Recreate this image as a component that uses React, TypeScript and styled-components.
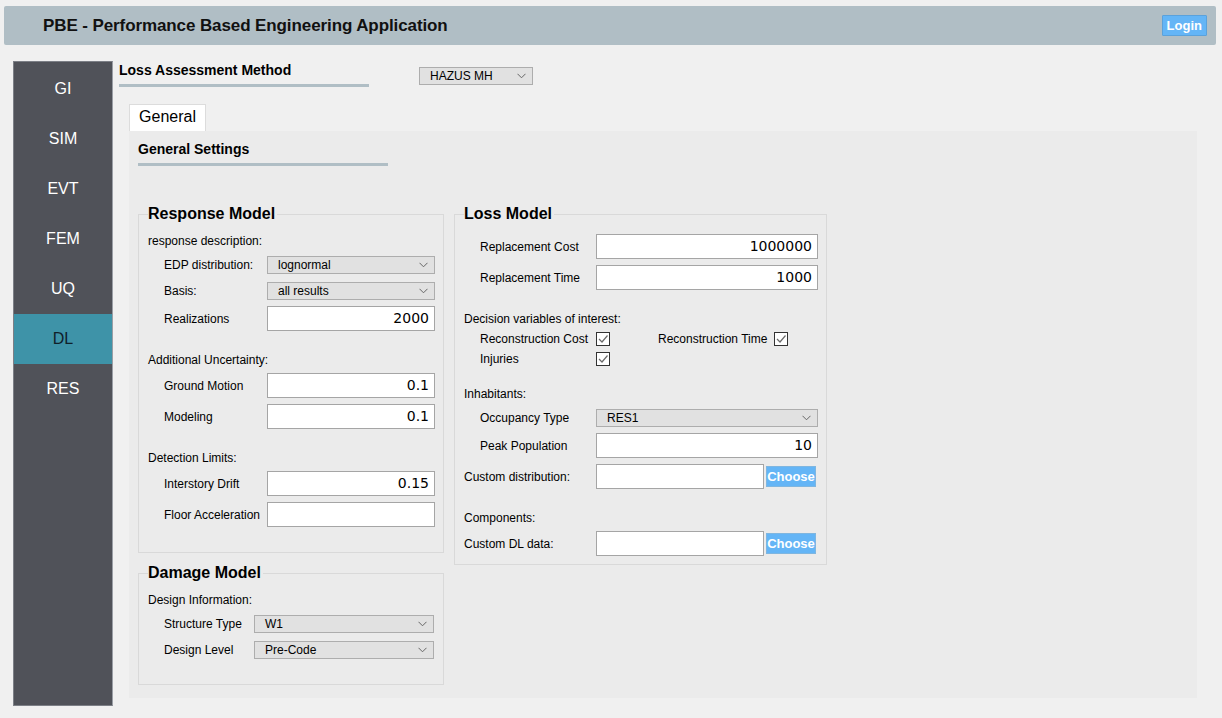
import React from "react";
import styled, { createGlobalStyle } from "styled-components";

const Global = createGlobalStyle`
  html, body { margin: 0; padding: 0; background: #f0f0f0; }
  body { font-family: "Liberation Sans", Arial, sans-serif; color: #000; }
  * { box-sizing: border-box; }
`;

const Page = styled.div`
  width: 1222px;
  height: 718px;
  padding: 6px 6px 0 4px;
  display: flex;
  flex-direction: column;
`;

const Header = styled.header`
  height: 39px;
  width: 1212px;
  background: #b0bec5;
  border-radius: 2px;
  display: flex;
  align-items: center;
  justify-content: space-between;
  padding: 0 9px 0 39px;
`;

const AppTitle = styled.h1`
  margin: 0;
  font-size: 17px;
  font-weight: bold;
  color: #111;
  letter-spacing: -0.1px;
`;

const LoginButton = styled.button`
  height: 21px;
  padding: 0 4px;
  background: #64b5f6;
  border: 1px solid #5aa2dc;
  color: #fff;
  font-family: "Liberation Sans", Arial, sans-serif;
  font-weight: bold;
  font-size: 13px;
  border-radius: 1px;
`;

const Body = styled.div`
  display: flex;
  margin-top: 16px;
  flex: 1;
`;

const Sidebar = styled.nav`
  margin-left: 9px;
  width: 100px;
  height: 645px;
  background: #505259;
  border: 1px solid #7c7f86;
  border-right-color: #9a9ea5;
  display: flex;
  flex-direction: column;
  padding-top: 2px;
`;

const NavItem = styled.div<{ $active?: boolean }>`
  height: 50px;
  display: flex;
  align-items: center;
  justify-content: center;
  font-size: 16px;
  color: ${(p) => (p.$active ? "#10202a" : "#ffffff")};
  background: ${(p) => (p.$active ? "#3e93a8" : "transparent")};
`;

const Main = styled.main`
  margin-left: 6px;
  display: flex;
  flex-direction: column;
`;

const TopBar = styled.div`
  display: flex;
  align-items: flex-start;
`;

const TitleBlock = styled.div<{ $w: number }>`
  width: ${(p) => p.$w}px;
  display: flex;
  flex-direction: column;
`;

const BlockTitle = styled.div`
  font-size: 14px;
  font-weight: bold;
  height: 19px;
  line-height: 19px;
  margin-bottom: 4px;
`;

const Underline = styled.div`
  height: 3px;
  background: #b0bec5;
`;

const Select = styled.div<{ $w: number; $pl?: number }>`
  width: ${(p) => p.$w}px;
  height: 18px;
  background: #e1e1e1;
  border: 1px solid #adadad;
  display: flex;
  align-items: center;
  justify-content: space-between;
  padding: 0 6px 0 ${(p) => p.$pl ?? 10}px;
  font-size: 12px;
  flex-shrink: 0;
`;

const TopSelectWrap = styled.div`
  margin-left: 50px;
  margin-top: 6px;
`;

const TabBar = styled.div`
  margin-top: 17px;
  margin-left: 10px;
  display: flex;
`;

const Tab = styled.div`
  width: 77px;
  height: 27px;
  background: #ffffff;
  border: 1px solid #dcdcdc;
  border-bottom: none;
  font-size: 16px;
  display: flex;
  align-items: center;
  justify-content: center;
  padding-bottom: 2px;
`;

const Panel = styled.section`
  margin-left: 10px;
  width: 1068px;
  height: 567px;
  background: #ebebeb;
  padding: 9px 9px 0 9px;
`;

const Columns = styled.div`
  display: flex;
  gap: 10px;
  margin-top: 39px;
  align-items: flex-start;
`;

const Column = styled.div`
  display: flex;
  flex-direction: column;
`;

const Group = styled.fieldset<{ $w: number; $pb: number; $mt?: number }>`
  width: ${(p) => p.$w}px;
  margin: ${(p) => p.$mt ?? 0}px 0 0 0;
  padding: 0 10px ${(p) => p.$pb}px 9px;
  border: 1px solid #d9d9d9;
  min-width: 0;
  display: flex;
  flex-direction: column;
`;

const Legend = styled.legend`
  font-size: 16px;
  font-weight: bold;
  line-height: 18px;
  padding: 0 2px 0 0;
  margin-left: 0;
`;

const Caption = styled.div<{ $mt: number }>`
  margin-top: ${(p) => p.$mt}px;
  height: 20px;
  line-height: 20px;
  font-size: 12px;
`;

const Row = styled.div<{ $mt: number; $h: number; $indent?: number }>`
  margin-top: ${(p) => p.$mt}px;
  height: ${(p) => p.$h}px;
  display: flex;
  align-items: center;
  padding-left: ${(p) => p.$indent ?? 0}px;
`;

const Label = styled.div<{ $w: number }>`
  width: ${(p) => p.$w}px;
  font-size: 12px;
  flex-shrink: 0;
`;

const Input = styled.div<{ $w: number }>`
  width: ${(p) => p.$w}px;
  height: 25px;
  background: #ffffff;
  border: 1px solid #a5a5a5;
  font-family: "DejaVu Sans", sans-serif;
  font-size: 14px;
  text-align: right;
  line-height: 23px;
  padding-right: 5px;
  flex-shrink: 0;
`;

const ChooseButton = styled.button`
  margin-left: 2px;
  width: 52px;
  height: 21px;
  background: #64b5f6;
  border: 1px solid #7fb6e0;
  color: #fff;
  font-family: "Liberation Sans", Arial, sans-serif;
  font-weight: bold;
  font-size: 13px;
  padding: 0;
`;

const CheckBox = styled.div`
  width: 14px;
  height: 14px;
  border: 1px solid #333;
  background: #fff;
  display: flex;
  align-items: center;
  justify-content: center;
  flex-shrink: 0;
`;

const CheckItem = styled.div<{ $w: number }>`
  width: ${(p) => p.$w}px;
  display: flex;
  align-items: center;
`;

const Chevron = () => (
  <svg width="9" height="6" viewBox="0 0 9 6">
    <path d="M0.5 0.8 L4.5 4.8 L8.5 0.8" fill="none" stroke="#666" strokeWidth="1" />
  </svg>
);

const Check = () => (
  <svg width="12" height="12" viewBox="0 0 12 12">
    <path d="M2 6 L5 9 L10.5 2.5" fill="none" stroke="#6a6a6a" strokeWidth="1.2" />
  </svg>
);

const Dropdown = ({ w, value, pl }: { w: number; value: string; pl?: number }) => (
  <Select $w={w} $pl={pl}>
    <span>{value}</span>
    <Chevron />
  </Select>
);

const Checked = ({ w, label }: { w: number; label: string }) => (
  <CheckItem $w={w}>
    <Label $w={116}>{label}</Label>
    <CheckBox>
      <Check />
    </CheckBox>
  </CheckItem>
);

const navItems = ["GI", "SIM", "EVT", "FEM", "UQ", "DL", "RES"];

export default function App() {
  return (
    <>
      <Global />
      <Page>
        <Header>
          <AppTitle>PBE - Performance Based Engineering Application</AppTitle>
          <LoginButton>Login</LoginButton>
        </Header>
        <Body>
          <Sidebar>
            {navItems.map((n) => (
              <NavItem key={n} $active={n === "DL"}>
                {n}
              </NavItem>
            ))}
          </Sidebar>
          <Main>
            <TopBar>
              <TitleBlock $w={250}>
                <BlockTitle>Loss Assessment Method</BlockTitle>
                <Underline />
              </TitleBlock>
              <TopSelectWrap>
                <Dropdown w={114} value="HAZUS MH" pl={10} />
              </TopSelectWrap>
            </TopBar>
            <TabBar>
              <Tab>General</Tab>
            </TabBar>
            <Panel>
              <TitleBlock $w={250}>
                <BlockTitle>General Settings</BlockTitle>
                <Underline />
              </TitleBlock>
              <Columns>
                <Column>
                  <Group $w={306} $pb={25}>
                    <Legend>Response Model</Legend>
                    <Caption $mt={8}>response description:</Caption>
                    <Row $mt={5} $h={18} $indent={16}>
                      <Label $w={103}>EDP distribution:</Label>
                      <Dropdown w={168} value="lognormal" />
                    </Row>
                    <Row $mt={8} $h={18} $indent={16}>
                      <Label $w={103}>Basis:</Label>
                      <Dropdown w={168} value="all results" />
                    </Row>
                    <Row $mt={6} $h={25} $indent={16}>
                      <Label $w={103}>Realizations</Label>
                      <Input $w={168}>2000</Input>
                    </Row>
                    <Caption $mt={19}>Additional Uncertainty:</Caption>
                    <Row $mt={3} $h={25} $indent={16}>
                      <Label $w={103}>Ground Motion</Label>
                      <Input $w={168}>0.1</Input>
                    </Row>
                    <Row $mt={6} $h={25} $indent={16}>
                      <Label $w={103}>Modeling</Label>
                      <Input $w={168}>0.1</Input>
                    </Row>
                    <Caption $mt={19}>Detection Limits:</Caption>
                    <Row $mt={3} $h={25} $indent={16}>
                      <Label $w={103}>Interstory Drift</Label>
                      <Input $w={168}>0.15</Input>
                    </Row>
                    <Row $mt={6} $h={25} $indent={16}>
                      <Label $w={103}>Floor Acceleration</Label>
                      <Input $w={168}></Input>
                    </Row>
                  </Group>
                  <Group $w={306} $pb={25} $mt={11}>
                    <Legend>Damage Model</Legend>
                    <Caption $mt={8}>Design Information:</Caption>
                    <Row $mt={5} $h={18} $indent={16}>
                      <Label $w={90}>Structure Type</Label>
                      <Dropdown w={180} value="W1" />
                    </Row>
                    <Row $mt={8} $h={18} $indent={16}>
                      <Label $w={90}>Design Level</Label>
                      <Dropdown w={180} value="Pre-Code" />
                    </Row>
                  </Group>
                </Column>
                <Column>
                  <Group $w={373} $pb={8}>
                    <Legend>Loss Model</Legend>
                    <Row $mt={11} $h={25} $indent={16}>
                      <Label $w={116}>Replacement Cost</Label>
                      <Input $w={222}>1000000</Input>
                    </Row>
                    <Row $mt={6} $h={25} $indent={16}>
                      <Label $w={116}>Replacement Time</Label>
                      <Input $w={222}>1000</Input>
                    </Row>
                    <Caption $mt={19}>Decision variables of interest:</Caption>
                    <Row $mt={1} $h={18} $indent={16}>
                      <Checked w={178} label="Reconstruction Cost" />
                      <Checked w={140} label="Reconstruction Time" />
                    </Row>
                    <Row $mt={2} $h={18} $indent={16}>
                      <Checked w={178} label="Injuries" />
                    </Row>
                    <Caption $mt={16}>Inhabitants:</Caption>
                    <Row $mt={5} $h={18} $indent={16}>
                      <Label $w={116}>Occupancy Type</Label>
                      <Dropdown w={222} value="RES1" />
                    </Row>
                    <Row $mt={6} $h={25} $indent={16}>
                      <Label $w={116}>Peak Population</Label>
                      <Input $w={222}>10</Input>
                    </Row>
                    <Row $mt={6} $h={25}>
                      <Label $w={132}>Custom distribution:</Label>
                      <Input $w={168}></Input>
                      <ChooseButton>Choose</ChooseButton>
                    </Row>
                    <Caption $mt={19}>Components:</Caption>
                    <Row $mt={3} $h={25}>
                      <Label $w={132}>Custom DL data:</Label>
                      <Input $w={168}></Input>
                      <ChooseButton>Choose</ChooseButton>
                    </Row>
                  </Group>
                </Column>
              </Columns>
            </Panel>
          </Main>
        </Body>
      </Page>
    </>
  );
}
